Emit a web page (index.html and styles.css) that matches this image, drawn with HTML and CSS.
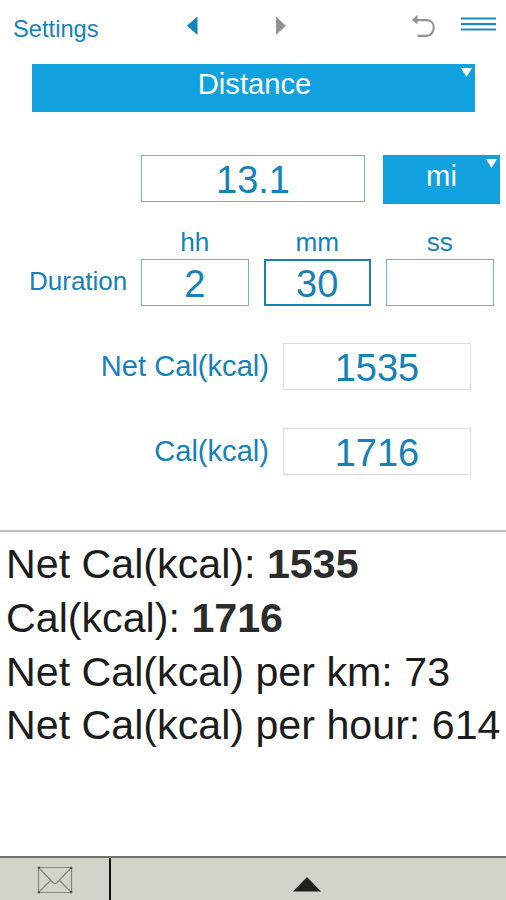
FILE: index.html
```html
<!DOCTYPE html>
<html lang="en">
<head>
<meta charset="utf-8">
<title>Distance calculator</title>
<link rel="stylesheet" href="styles.css">
</head>
<body>
<main class="app">
  <header class="toolbar">
    <span class="settings">Settings</span>
    <svg class="prev" width="12" height="20" viewBox="0 0 12 20"><path d="M11.500.500v18.500L.800 9.700z" fill="#1485bb"/></svg>
    <svg class="next" width="12" height="20" viewBox="0 0 12 20"><path d="M1 .500v18.500l9.800-9.300z" fill="#929292"/></svg>
    <svg class="undo" width="26" height="26" viewBox="0 0 26 26"><path d="M6 6.100h9.500c4.300 0 7.300 3 7.300 7.500 0 4.800-3 8.300-7.300 8.300H6.500" fill="none" stroke="#969696" stroke-width="2.200"/><path d="M.800 6L6.500.800v9.500z" fill="#929292"/></svg>
    <svg class="menu" width="35" height="15" viewBox="0 0 35 15"><path d="M0 1.500h35M0 7.200h35M0 12.500h35" stroke="#1c8abe" stroke-width="2.200"/></svg>
  </header>

  <div class="select mode">Distance<svg class="caret" width="11" height="9" viewBox="0 0 11 9"><path d="M0 0h11L5.500 9z" fill="#fff"/></svg></div>

  <div class="distance-row">
    <div class="field">13.1</div>
    <div class="select unit">mi<svg class="caret" width="11" height="9" viewBox="0 0 11 9"><path d="M0 0h11L5.500 9z" fill="#fff"/></svg></div>
  </div>

  <div class="duration">
    <span></span><span class="part">hh</span><span class="part">mm</span><span class="part">ss</span>
    <span class="name">Duration</span>
    <div class="field">2</div>
    <div class="field active">30</div>
    <div class="field"></div>
  </div>

  <div class="output-row"><span class="label">Net Cal(kcal)</span><div class="field readonly">1535</div></div>
  <div class="output-row"><span class="label">Cal(kcal)</span><div class="field readonly">1716</div></div>

  <section class="results">
    <p>Net Cal(kcal): <b>1535</b></p>
    <p>Cal(kcal): <b>1716</b></p>
    <p>Net Cal(kcal) per km: 73</p>
    <p>Net Cal(kcal) per hour: 614</p>
  </section>

  <footer class="bottom">
    <div class="mail"><svg width="36" height="28" viewBox="0 0 36 28"><path d="M1.500 1.500h33v25h-33zM1.500 1.500l14.500 15q2 1.800 4 0l14.500-15M1.500 26.500l12-12M34.500 26.500l-12-12" fill="none" stroke="#85857e" stroke-width="1.200"/><path d="M.8.800h2v2h-2zM33.200.800h2v2h-2zM.8 25.200h2v2h-2zM33.200 25.200h2v2h-2z" fill="#41413d"/></svg></div>
    <div class="expand"><svg width="28" height="15" viewBox="0 0 28 15"><path d="M14 0l14 14.500H0z" fill="#20201d"/></svg></div>
  </footer>
</main>
</body>
</html>
```

FILE: styles.css
```css
* { box-sizing: border-box; }
body {
  margin: 0;
  background: #fff;
  color: #1482b9;
  font-family: "Liberation Sans", Arial, sans-serif;
}
svg { display: block; flex: none; }
.app {
  width: 506px;
  height: 900px;
  display: flex;
  flex-direction: column;
  overflow: hidden;
}
.toolbar {
  height: 64px;
  padding: 9px 10px 0 13px;
  display: flex;
  align-items: flex-start;
}
.settings {
  width: 173px;
  font-size: 23.7px;
  line-height: 40px;
}
.prev { margin-top: 7px; }
.next { margin: 7px 0 0 77px; }
.undo { margin: 5px 0 0 124px; }
.menu { margin: 8px 0 0 auto; }

.select {
  position: relative;
  background: #12a1df;
  color: #fff;
  text-align: center;
}
.caret { position: absolute; top: 4px; right: 3px; }
.mode {
  width: 443px;
  height: 48px;
  margin-left: 32px;
  padding-left: 2px;
  font-size: 29.2px;
  line-height: 41px;
}
.distance-row {
  display: flex;
  justify-content: space-between;
  margin: 43px 6px 0 141px;
}
.distance-row .field { width: 224px; }
.unit {
  width: 117px;
  height: 49px;
  font-size: 29.2px;
  line-height: 43px;
}
.field {
  height: 47px;
  padding-top: 2px;
  border: 1px solid #69b4d7;
  font-size: 38px;
  line-height: 45px;
  text-align: center;
}
.active { border: 2px solid #1a7fb1; line-height: 43px; }
.duration {
  display: grid;
  grid-template-columns: 97px repeat(3, 107.5px);
  grid-template-rows: 30px 47px;
  column-gap: 15px;
  margin: 25px 0 0 29px;
}
.part {
  font-size: 26.2px;
  line-height: 26px;
  text-align: center;
}
.name { font-size: 26px; line-height: 44px; }
.output-row {
  display: flex;
  justify-content: flex-end;
  margin: 37px 35px 0 0;
}
.output-row + .output-row { margin-top: 38px; }
.label {
  margin-right: 14px;
  font-size: 29.1px;
  line-height: 47px;
}
.readonly { width: 188px; border-color: #dedede; }
.results {
  flex: 1;
  margin-top: 55px;
  padding: 6px 0 0 6px;
  border-top: 2px solid #bcbcbc;
  color: #1c1c1c;
  font-size: 41.2px;
  line-height: 53.8px;
  white-space: nowrap;
}
.results p { margin: 0; }
.results b { color: #2c2c2c; }
.bottom {
  height: 44px;
  border-top: 2px solid #74746f;
  background: #d3d3cb;
  display: flex;
}
.mail {
  width: 111px;
  padding: 8px 0 0 37px;
  border-right: 2px solid #111;
}
.expand { padding: 19px 0 0 182px; }
```
